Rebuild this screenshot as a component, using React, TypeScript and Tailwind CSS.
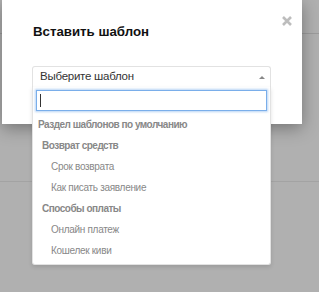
import React from 'react'

const groups = [
  { title: 'Возврат средств', items: ['Срок возврата', 'Как писать заявление'] },
  { title: 'Способы оплаты', items: ['Онлайн платеж', 'Кошелек киви'] },
]

export default function App() {
  return (
    <div className="relative w-[319px] h-[292px] overflow-hidden bg-[#b0b0b0] font-['Liberation_Sans']">
      {/* page behind the overlay */}
      <div className="h-[34px] border-b border-[#9c9c9c]" />
      <div className="h-[148px] border-b border-[#a3a3a3]" />

      {/* modal */}
      <div className="absolute left-[2px] top-0 w-[300px] h-[124px] bg-white shadow-[0_4px_16px_rgba(0,0,0,0.35)]">
        <div className="flex items-start justify-between pl-[31px] pr-[10px] pt-[16px]">
          <h3 className="mt-[8px] text-[13.25px] font-bold text-[#111] leading-[16px]">Вставить шаблон</h3>
          <svg width="10" height="10" viewBox="0 0 10 10" className="text-[#bdbdbd]">
            <path d="M1 1 L9 9 M9 1 L1 9" stroke="currentColor" strokeWidth="2.6" strokeLinecap="butt" />
          </svg>
        </div>

        <div className="relative ml-[30px] mt-[26px] w-[239px]">
          <div className="flex h-[21px] items-center justify-between rounded-t-[3px] border border-b-0 border-[#e2e2e2] pl-[7px] pr-[5px] text-[11.5px] tracking-[-0.25px] text-[#333]">
            <span>Выберите шаблон</span>
            <span className="w-0 h-0 border-x-[3px] border-x-transparent border-b-[3px] border-b-[#888]" />
          </div>

          {/* dropdown */}
          <div className="absolute left-0 top-[21px] w-[239px] rounded-b-[3px] border border-t-0 border-[#e2e2e2] bg-white pb-[3px] shadow-[0_2px_4px_rgba(0,0,0,0.12)]">
            <div className="px-[3px] pt-[3px]">
              <div className="flex h-[21px] items-center border border-[#7aaeea] px-[3px] shadow-[0_0_2px_1px_rgba(100,160,230,0.45)]">
                <span className="w-px h-[13px] bg-[#333]" />
              </div>
            </div>
            <div className="mt-[3px] flex flex-col text-[10px] tracking-[-0.3px] text-[#888]">
              <div className="h-[21px] flex items-center pl-[5px] font-bold tracking-[-0.5px]">Раздел шаблонов по умолчанию</div>
              {groups.map((g) => (
                <React.Fragment key={g.title}>
                  <div className="h-[21px] flex items-center pl-[9px] font-bold tracking-[-0.5px]">{g.title}</div>
                  {g.items.map((it) => (
                    <div key={it} className="h-[21px] flex items-center pl-[18px]">{it}</div>
                  ))}
                </React.Fragment>
              ))}
            </div>
          </div>
        </div>
      </div>
    </div>
  )
}
